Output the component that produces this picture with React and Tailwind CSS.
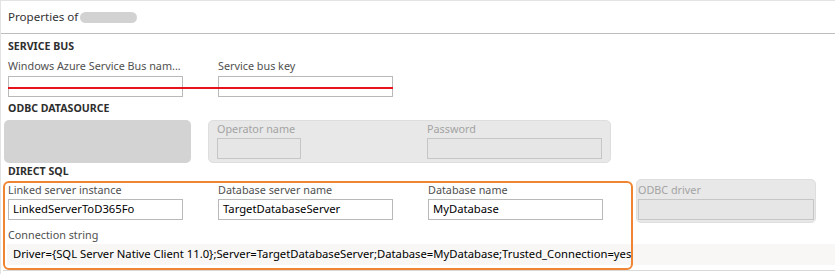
import React from 'react';

const font = { fontFamily: '"Segoe UI", "Noto Sans", sans-serif' };

const Label = ({ children, disabled }) => (
    <div className={`h-4 leading-4 text-[10.8px] whitespace-nowrap ${disabled ? 'text-[#a3a3a3]' : 'text-[#505050]'}`}>{children}</div>
);

const Field = ({ value, disabled, className = '' }) => (
    <div
        className={`h-[21px] border flex items-center px-[4px] text-[11.25px] text-black whitespace-nowrap ${
            disabled ? 'bg-[#e6e6e6] border-[#c6c6c6]' : 'bg-white border-[#b9b9b9]'
        } ${className}`}
    >
        {value}
    </div>
);

const Section = ({ children }) => (
    <div className="h-4 leading-4 text-[10.6px] font-bold text-[#2e2e2e] pl-[7px]">{children}</div>
);

export default function App() {
    return (
        <div className="relative w-[835px] h-[274px] bg-white border-t border-l border-[#e3e3e3] overflow-hidden" style={font}>
            {/* header */}
            <div className="h-[33px] border-b border-[#bdbdbd] flex items-center pl-[7px] gap-[2px]">
                <span className="text-[11.6px] text-[#333333]">Properties of</span>
                <span className="w-[57px] h-[11px] rounded-full bg-[#d2d2d2]" />
            </div>

            <div className="mt-1">
                <Section>SERVICE BUS</Section>
                <div className="flex gap-[35px] pl-[7px] mt-1">
                    <div className="w-[175px]">
                        <Label>Windows Azure Service Bus nam...</Label>
                        <Field className="mt-[2px]" />
                    </div>
                    <div className="w-[175px]">
                        <Label>Service bus key</Label>
                        <Field className="mt-[2px]" />
                    </div>
                </div>

                <div className="mt-[3px]">
                    <Section>ODBC DATASOURCE</Section>
                </div>
                <div className="flex mt-1 pl-[3px] gap-[17px]">
                    <div className="w-[187px] h-[43px] rounded-[5px] bg-[#d3d3d3]" />
                    <div className="w-[403px] h-[43px] rounded-[5px] bg-[#e8e8e8] border border-[#dedede] flex pl-[8px]">
                        <div className="w-[84px]">
                            <Label disabled>Operator name</Label>
                            <Field disabled className="mt-[1px]" />
                        </div>
                        <div className="w-[175px] ml-[126px]">
                            <Label disabled>Password</Label>
                            <Field disabled className="mt-[1px]" />
                        </div>
                    </div>
                </div>

                <Section>DIRECT SQL</Section>
                <div className="flex">
                    <div className="w-[631px]">
                        <div className="flex gap-[35px] pl-[7px] mt-[3px]">
                            <div className="w-[175px]">
                                <Label>Linked server instance</Label>
                                <Field value="LinkedServerToD365Fo" className="mt-[1px]" />
                            </div>
                            <div className="w-[175px]">
                                <Label>Database server name</Label>
                                <Field value="TargetDatabaseServer" className="mt-[1px]" />
                            </div>
                            <div className="w-[175px]">
                                <Label>Database name</Label>
                                <Field value="MyDatabase" className="mt-[1px]" />
                            </div>
                        </div>
                    </div>
                    <div className="ml-[4px] w-[180px] h-[44px] rounded-[5px] bg-[#e8e8e8] border border-[#dedede] px-[1px] pt-[2px]">
                        <Label disabled>ODBC driver</Label>
                        <Field disabled className="mt-[1px]" />
                    </div>
                </div>
                <div className="pl-[7px] mt-[4px]">
                    <Label>Connection string</Label>
                </div>
                <div className="ml-[6px] mt-[1px] h-[21px] bg-[#f8f7f5] flex items-center pl-[6px] text-[11.25px] text-black whitespace-nowrap">
                    Driver={'{'}SQL Server Native Client 11.0{'}'};Server=TargetDatabaseServer;Database=MyDatabase;Trusted_Connection=yes
                </div>
                <div className="ml-[2px] mt-[5px] border-t border-[#d9d9d9]" />
            </div>

            {/* annotations */}
            <div className="absolute left-[7px] top-[86px] w-[385px] h-[2px] bg-[#e8131a]" />
            <div className="absolute left-[2px] top-[180px] w-[630px] h-[89px] border-2 border-[#ef8533] rounded-[6px]" />
        </div>
    );
}
